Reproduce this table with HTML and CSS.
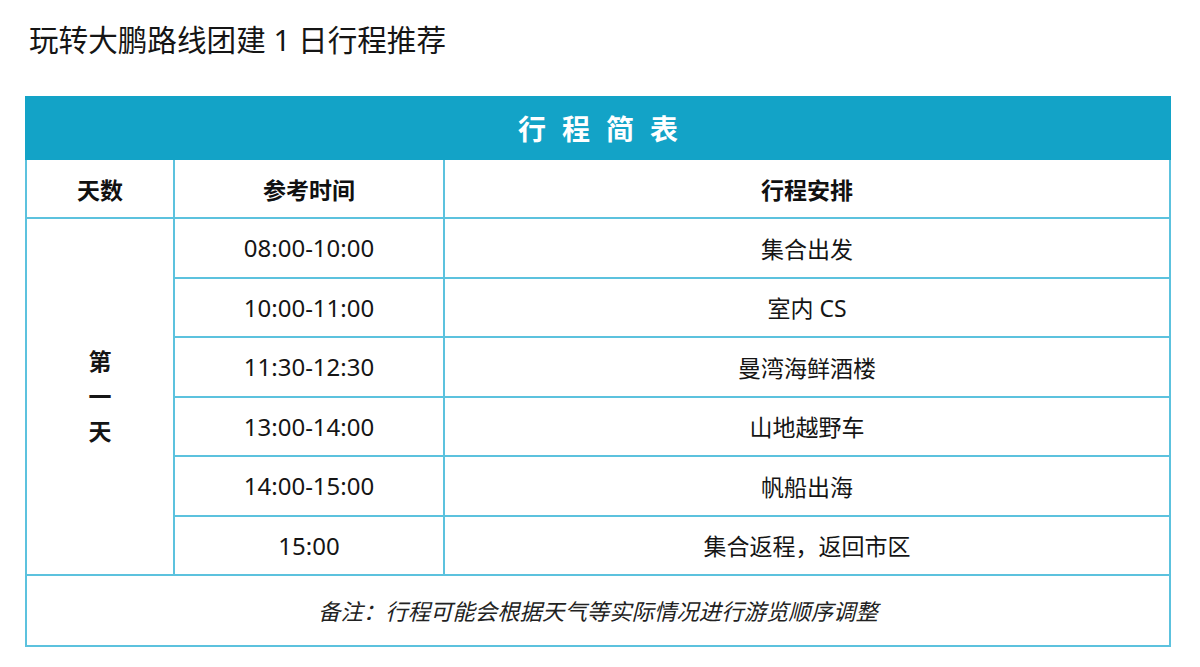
FILE: index.html
```html
<!DOCTYPE html>
<html lang="zh-CN">
<head>
<meta charset="utf-8">
<title>玩转大鹏路线团建 1 日行程推荐</title>
<link rel="stylesheet" href="styles.css">
</head>
<body>
<h1 class="page-title">玩转大鹏路线团建 1 日行程推荐</h1>
<table class="plan">
  <colgroup>
    <col class="c-day">
    <col class="c-time">
    <col class="c-item">
  </colgroup>
  <thead>
    <tr class="row-caption"><th colspan="3" class="caption-cell">行程简表</th></tr>
    <tr class="row-head">
      <th>天数</th>
      <th>参考时间</th>
      <th>行程安排</th>
    </tr>
  </thead>
  <tbody>
    <tr class="row">
      <td rowspan="6" class="day-cell"><span class="day-text">第<br>一<br>天</span></td>
      <td class="time">08:00-10:00</td>
      <td>集合出发</td>
    </tr>
    <tr class="row"><td class="time">10:00-11:00</td><td>室内 CS</td></tr>
    <tr class="row"><td class="time">11:30-12:30</td><td>曼湾海鲜酒楼</td></tr>
    <tr class="row"><td class="time">13:00-14:00</td><td>山地越野车</td></tr>
    <tr class="row"><td class="time">14:00-15:00</td><td>帆船出海</td></tr>
    <tr class="row"><td class="time">15:00</td><td>集合返程，返回市区</td></tr>
    <tr class="row-note"><td colspan="3" class="note-cell">备注：行程可能会根据天气等实际情况进行游览顺序调整</td></tr>
  </tbody>
</table>
</body>
</html>
```

FILE: styles.css
```css
html, body {
  margin: 0;
  padding: 0;
  background: #ffffff;
}

body {
  font-family: "Noto Sans", "Noto Sans CJK SC", sans-serif;
  color: #111111;
}

.page-title {
  margin: 0;
  padding: 20px 0 0 29px;
  font-size: 29.6px;
  line-height: 40px;
  font-weight: 400;
  color: #151515;
}

.plan {
  margin: 36px 0 0 25px;
  width: 1144px;
  border-collapse: collapse;
  table-layout: fixed;
  font-size: 23px;
}

.c-day { width: 148px; }
.c-time { width: 270px; }
.c-item { width: 726px; }

.plan th,
.plan td {
  border: 2px solid #5cc2de;
  text-align: center;
  vertical-align: middle;
  padding: 0;
}

.caption-cell {
  background: #13a3c7;
  border-color: #13a3c7 !important;
  color: #ffffff;
  font-size: 28px;
  font-weight: 700;
  letter-spacing: 16px;
  padding-left: 16px !important;
  height: 60px;
}

.row-head th {
  height: 57px;
  font-weight: 700;
  color: #111111;
}

.row td {
  height: 57.5px;
  color: #151515;
}

.plan td.time {
  font-size: 24px;
}

.day-cell .day-text {
  display: inline-block;
  font-weight: 700;
  line-height: 35px;
}

.note-cell {
  height: 69px;
  font-size: 22.4px;
  font-style: italic;
  color: #222222;
}
```
